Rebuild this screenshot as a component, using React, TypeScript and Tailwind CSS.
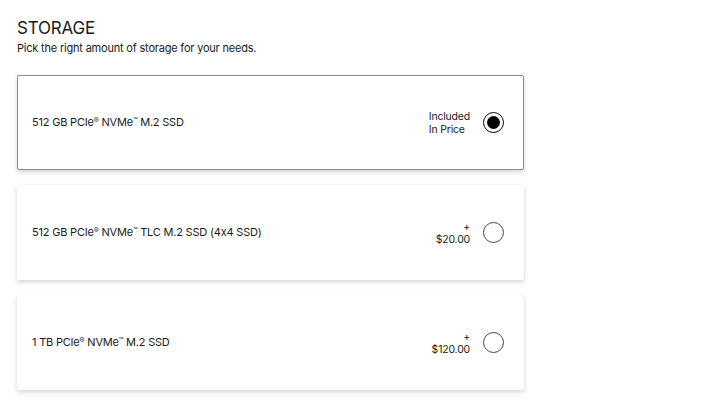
import { useState } from 'react';

type StorageOption = {
    id: string;
    label: string;
    price: number;
};

const options: StorageOption[] = [
    { id: '512', label: '512 GB PCIe® NVMe™ M.2 SSD', price: 0 },
    { id: '512tlc', label: '512 GB PCIe® NVMe™ TLC M.2 SSD (4x4 SSD)', price: 20 },
    { id: '1tb', label: '1 TB PCIe® NVMe™ M.2 SSD', price: 120 },
];

// shrink the ® / ™ marks so they sit small and raised like the product copy
function Label({ text }: { text: string }) {
    return (
        <>
            {text.split(/([®™])/).map((part, i) =>
                part === '®' || part === '™'
                    ? <span key={i} className="relative -top-[3px] text-[7.5px]">{part}</span>
                    : <span key={i}>{part}</span>
            )}
        </>
    );
}

function Radio({ checked }: { checked: boolean }) {
    return (
        <span className={`flex h-[21px] w-[21px] items-center justify-center rounded-full border ${checked ? 'border-[1.5px] border-black' : 'border-[#444]'}`}>
            {checked && <span className="h-[13px] w-[13px] rounded-full bg-black" />}
        </span>
    );
}

export default function App() {
    const [selected, setSelected] = useState('512');

    return (
        <div className="min-h-[410px] bg-white px-[17px] pt-[16px] text-[#1a1a1a] font-['Inter',sans-serif]">
            <h2 className="text-[17px] leading-6 tracking-[-0.2px]">STORAGE</h2>
            <p className="text-[11px] leading-4 tracking-[-0.2px]">Pick the right amount of storage for your needs.</p>

            <div className="mt-[19px] flex w-[507px] flex-col gap-[15px]">
                {options.map(o => {
                    const isOn = selected === o.id;
                    return (
                        <button
                            key={o.id}
                            onClick={() => setSelected(o.id)}
                            className={`flex h-[95px] items-center justify-between rounded-[2px] bg-white pl-[14px] pr-[19px] text-left shadow-[0_2px_5px_rgba(0,0,0,0.18)] ${isOn ? 'border border-[#8c8c8c]' : 'border border-transparent'}`}
                        >
                            <span className="text-[11px] tracking-[-0.2px]"><Label text={o.label} /></span>
                            <span className="flex items-center gap-[13px]">
                                {o.price === 0 ? (
                                    <span className="text-[10.5px] leading-[13px] tracking-[-0.2px]">Included<br />In Price</span>
                                ) : (
                                    <span className="flex flex-col items-end text-[10.5px] leading-[13px] tracking-[-0.2px]">
                                        <span>+</span>
                                        <span>${o.price.toFixed(2)}</span>
                                    </span>
                                )}
                                <Radio checked={isOn} />
                            </span>
                        </button>
                    );
                })}
            </div>
        </div>
    );
}
